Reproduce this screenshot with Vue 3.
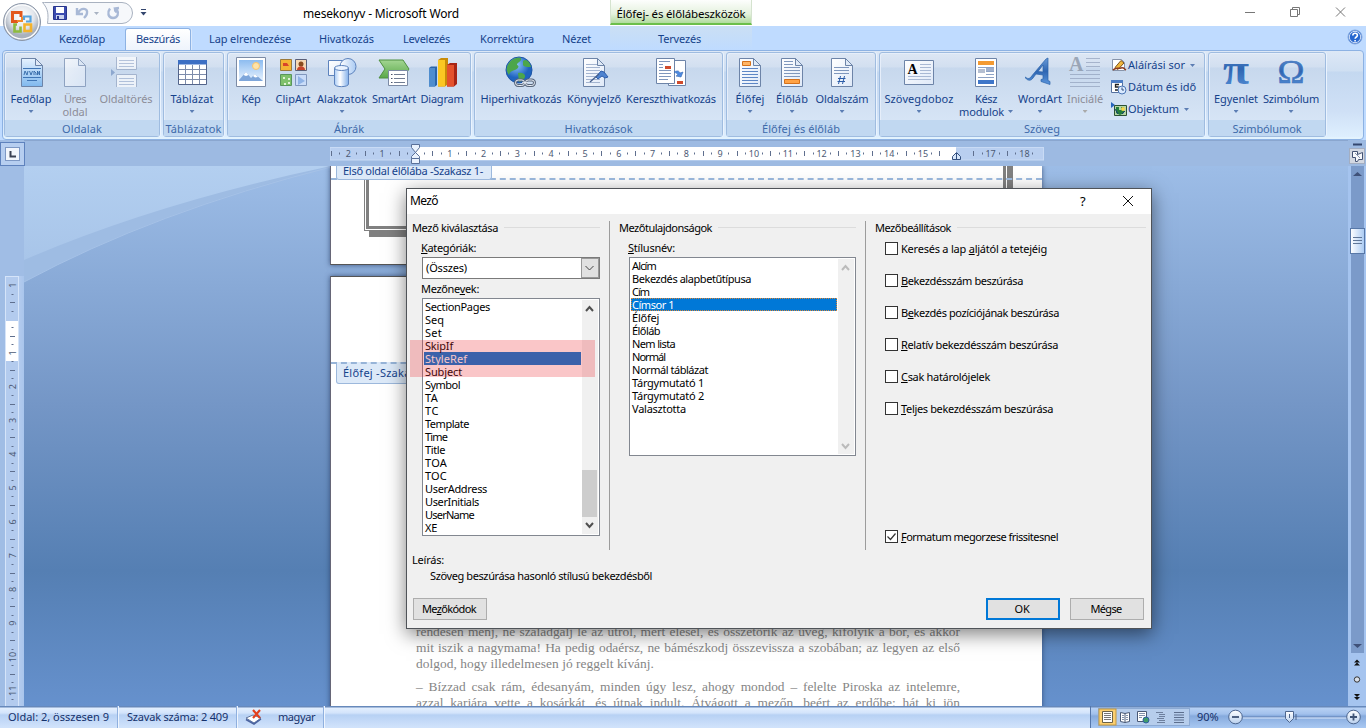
<script setup>
const vFit = {
  mounted(el, { value }) {
    if (!value) return
    const natural = el.getBoundingClientRect().width
    el.style.letterSpacing = (value - natural) / el.textContent.length + 'px'
  },
}

const mnemonic = (s) => s.replace(/&(.)/, '<u>$1</u>')

const tabs = [
  { label: 'Kezdőlap', x: 46, box: 78 },
  { label: 'Beszúrás', x: 44, box: 66, active: true },
  { label: 'Lap elrendezése', x: 82, box: 110 },
  { label: 'Hivatkozás', x: 55, box: 77 },
  { label: 'Levelezés', x: 47, box: 83 },
  { label: 'Korrektúra', x: 54, box: 78 },
  { label: 'Nézet', x: 29, box: 61 },
  { label: 'Tervezés', x: 43, box: 142 },
]

const page = (inner, x = 6, fill = 'url(#paper)') =>
  `<path d="M${x + 0.5} 2.5h14l7 7v21h-21z" fill="${fill}" stroke="#6d84a8"/>${inner}<path d="M${x + 14.5} 2.5v7h7z" fill="#dfe9f6" stroke="#6d84a8"/>`
const lines = (x1, x2, ys, c = '#7f97bd') =>
  ys.map((y) => `<path d="M${x1} ${y}.5H${x2}" stroke="${c}"/>`).join('')

const icons = {
  cover: page('<path d="M8 12.500h18M8 21.500h18M12 24.500h10" stroke="#3f75b5"/><path d="M9 19l1-4 2 4 1-4M14.500 15l1.500 4 1.500-4M19 19v-4l2 2v2M22.500 19v-4l2 4v-4" fill="none" stroke="#2f65a5" stroke-width=".9"/>', 6, 'url(#skyPage)'),
  blank: `<g opacity=".65">${page('', 5)}</g>`,
  pagebreak: `<g opacity=".65"><path d="M6.500 1v12.500h20V1" fill="#fff" stroke="#8fa0bd"/><path d="M6.500 31V18.500h20V31" fill="#fff" stroke="#8fa0bd"/>${lines(9, 24, [4, 7, 10, 22, 25, 28], '#a3b3cf')}<path d="M1 13l4 3.500L1 20z" fill="#6f8fc0"/></g>`,
  table: '<path d="M2.500 4.500h28v24h-28z" fill="#fff" stroke="#53648a"/><path d="M2 4h29v4.500H2z" fill="#3c6fc4"/><path d="M3 13.500h27M3 18.500h27M3 23.500h27M9.500 9v19M16.500 9v19M23.500 9v19" stroke="#7d8cab"/>',
  picture: '<path d="M1.500 1.500h29v29h-29z" fill="#fff" stroke="#7c8ba5"/><path d="M4 4h24v21H4z" fill="url(#sky)"/><circle cx="21" cy="10" r="3.500" fill="#ffe3a8" stroke="#f6c46e"/><path d="M4 25v-1l7-8 5 6 4-4 8 7z" fill="#7ea6da"/><path d="M8.500 19l2.500-3 2.500 3-2.500 1zM18 20l2-2 3 3-3 .5z" fill="#fff"/>',
  clipart: '<path d="M3.500 3.500h11v11h-11z" fill="#f5b534" stroke="#9c7a3a"/><path d="M6 7h4l2 3H6z" fill="#d8452a"/><path d="M18.500 3.500h11v11h-11z" fill="#f6d8b4" stroke="#5a5f77"/><circle cx="24" cy="8" r="2.500" fill="#8a4b1e"/><path d="M20 14c0-5 8-5 8 0z" fill="#c6452c"/><path d="M3.500 18.500h11v11h-11z" fill="#7fc16b" stroke="#58955b"/><path d="M6 21h2v2H6zm5 1h2v2h-2zm-4 5h2v2H7zm4-1h2v2h-2z" fill="#dff2d4"/><path d="M18.500 18.500h11v11h-11z" fill="#c9dcf8" stroke="#8097bd"/><path d="M21 20l7 5-7 4z" fill="#8fb3e6"/>',
  shapes: '<path d="M2.500 4.500h16v15h-16z" fill="url(#paper)" stroke="#5d83bd"/><circle cx="22" cy="10.500" r="8" fill="url(#ball)" stroke="#5d83bd"/><path d="M8.500 12v16c0 3.500 14 3.500 14 0V12" fill="url(#cyl)" stroke="#5d83bd"/><ellipse cx="15.500" cy="12" rx="7" ry="2.500" fill="#eaf3ff" stroke="#5d83bd"/>',
  smartart: '<path d="M1 4h24l6 9-6 9H1l6-9z" fill="url(#green)" stroke="#4e9040"/><path d="M10.500 14.500h19v15h-19z" fill="#fff" stroke="#7c8ba5"/><path d="M16 18.500h11M16 22.500h11M16 26.500h11" stroke="#707c92"/><path d="M13 18.500h1.500M13 22.500h1.500M13 26.500h1.500" stroke="#48536b"/>',
  chart: '<path d="M3 12l2-1.500h6V29l-2 1.500H3z" fill="#2b66ab"/><path d="M3 12h6v18.500H3z" fill="#4f8dce"/><path d="M12 4l3-2h7v26l-3 2.500h-7z" fill="#c98c08"/><path d="M12 4h7v26.500h-7z" fill="#fbc722"/><path d="M21 9l3-2h7v21l-3 2.500h-7z" fill="#a82515"/><path d="M21 9h7v21.500h-7z" fill="#e4512c"/>',
  globe: '<circle cx="14" cy="14" r="13" fill="url(#earth)" stroke="#1d55a5"/><path d="M4 7c3-5 9-6 12-5 1 4-4 4-4 7 3 1 1 4-2 5s-5 1-6 5C1 15 1 11 4 7zM18 5c4-3 7 2 8 6-3 0-7 0-8-2zM13 17c4-1 8 1 7 4s-5 5-6 5z" fill="#4ca64b"/><g fill="none" stroke="#59677c" stroke-width="3"><rect x="10.500" y="24" width="9" height="5.500" rx="2.700"/><rect x="20.500" y="24" width="9" height="5.500" rx="2.700"/></g><g fill="none" stroke="#e8eef6" stroke-width="1"><rect x="10.500" y="24" width="9" height="5.500" rx="2.700"/><rect x="20.500" y="24" width="9" height="5.500" rx="2.700"/><path d="M17 26.700h6"/></g>',
  bookmark: page(lines(8, 22, [8, 11, 14, 17, 20, 23, 26], '#a3b4d0') + '<path d="M18 21l5-6 3 1 4 5-3 1-3-2-4 3z" fill="#4e83d0" stroke="#2d5dab"/><path d="M12 26l9-8" stroke="#455f8d" stroke-width="1.300"/>', 5),
  crossref: '<path d="M13.500 4.500h17v25h-17z" fill="#fff" stroke="#6d84a8"/><path d="M22 25h6v3h-6z" fill="#cf4b2c"/><path d="M1.500 2.500h18v25h-18z" fill="#fff" stroke="#6d84a8"/><path d="M4 5.500h11M4 8.500h4M4 11.500h4M4 14.500h12M4 17.500h12M4 20.500h12M4 23.500h9" stroke="#7f97bd"/><path d="M10 10h6v3h-6z" fill="#cf4b2c"/><path d="M19 16c4-2 5-1 6 1l3-1-2 5-5-1 2-1c-1-2-2-2-4-3z" fill="#4e8ae0" stroke="#2f66b5" stroke-width=".6"/>',
  header: page(lines(8, 24, [12, 15, 18, 21, 24, 27], '#5d86c5') + '<path d="M8.500 5.500h8v4h-8z" fill="#ffb566" stroke="#d4711b"/>', 5),
  footer: page(lines(8, 17, [5, 8], '#7f97bd') + lines(8, 24, [11, 14, 17, 20], '#7f97bd') + '<path d="M8.500 23.500h15v4h-15z" fill="#ffa245" stroke="#d4711b"/>', 5),
  pagenum: page(lines(8, 23, [11, 14, 17], '#7f97bd') + '<path d="M14.500 20l-2 8M18.500 20l-2 8M12 22.500h7.500M11.500 25.500h7.500" stroke="#2c5da8" stroke-width="1"/>', 5),
  textbox: '<path d="M1.500 4.500h29v24h-29z" fill="url(#paper)" stroke="#6d84a8"/><path d="M17 8.500h11M17 11.500h11M17 14.500h11M17 17.500h11M5 20.500h23M5 23.500h23" stroke="#a9b9d4"/><text x="4.500" y="18" font-family="Liberation Serif" font-weight="bold" font-size="14">A</text>',
  quick: '<path d="M5.500 2.500h21v28h-21z" fill="#fff" stroke="#6d84a8"/><path d="M8 5h16v4H8z" fill="#f39a32"/><path d="M8 11.500h16M16 15.500h8M16 18.500h8M8 21.500h16" stroke="#8ea3c6"/><path d="M8 13h7v4H8z" fill="#b5bfd1"/><path d="M16 12h8v3h-8z" fill="#9fb0cd"/><path d="M8 24h16v4H8z" fill="#3f76c9"/>',
  wordart: '<path d="M1.500 21c3 3 5 1 7-2L22 3l2-1v22.500l2 1v3l-9-3v-2l2-.5v-4l-7-1-3 4c-2 3-5 3-7.500 0zM14 15.500l5 .5V9z" fill="url(#blue)" fill-rule="evenodd" stroke="#2a62a9" stroke-width=".7"/>',
  dropcap: '<g opacity=".65"><path d="M17 2.500h14M17 6.500h14M17 10.500h14M17 14.500h14M1 18.500h30M1 22.500h30M1 26.500h30M1 30.500h30" stroke="#8d9cb8"/><text x="0" y="15" font-family="Liberation Serif" font-weight="bold" font-size="20" fill="#7c8798">A</text></g>',
  pi: '<text x="3" y="27.500" font-family="Liberation Serif" font-weight="bold" font-size="44" fill="url(#blue)" textLength="26" lengthAdjust="spacingAndGlyphs">π</text>',
  omega: '<text x="2.500" y="27" font-family="Liberation Serif" font-size="34" fill="url(#blue)" stroke="#3d73bd" stroke-width=".6" textLength="27" lengthAdjust="spacingAndGlyphs">Ω</text>',
}

const groups = [
  { name: 'Oldalak', t: 40, w: 156, pad: 3, items: [
    { icon: 'cover', w: 46, l: [['Fedőlap', 41]], arrow: true },
    { icon: 'blank', w: 42, l: [['Üres', 22], ['oldal', 25]], off: true },
    { icon: 'pagebreak', w: 60, l: [['Oldaltörés', 53]], off: true },
  ] },
  { name: 'Táblázatok', t: 56, w: 61, pad: 3, items: [{ icon: 'table', w: 50, l: [['Táblázat', 43]], arrow: true }] },
  { name: 'Ábrák', t: 30, w: 244, pad: 4, items: [
    { icon: 'picture', w: 38, l: [['Kép', 19]] },
    { icon: 'clipart', w: 46, l: [['ClipArt', 35]] },
    { icon: 'shapes', w: 52, l: [['Alakzatok', 50]], arrow: true },
    { icon: 'smartart', w: 52, l: [['SmartArt', 44]] },
    { icon: 'chart', w: 44, l: [['Diagram', 43]] },
  ] },
  { name: 'Hivatkozások', t: 68, w: 249, pad: 2, items: [
    { icon: 'globe', w: 88, l: [['Hiperhivatkozás', 81]] },
    { icon: 'bookmark', w: 58, l: [['Könyvjelző', 54]] },
    { icon: 'crossref', w: 96, l: [['Kereszthivatkozás', 90]] },
  ] },
  { name: 'Élőfej és élőláb', t: 78, w: 150, pad: 4, items: [
    { icon: 'header', w: 38, l: [['Élőfej', 29]], arrow: true },
    { icon: 'footer', w: 46, l: [['Élőláb', 32]], arrow: true },
    { icon: 'pagenum', w: 54, l: [['Oldalszám', 53]], arrow: true },
  ] },
  { name: 'Szöveg', t: 36, w: 326, pad: 2, items: [
    { icon: 'textbox', w: 74, l: [['Szövegdoboz', 69]], arrow: true },
    { icon: 'quick', w: 60, l: [['Kész', 22], ['modulok', 45]], side: true },
    { icon: 'wordart', w: 48, l: [['WordArt', 44]], arrow: true },
    { icon: 'dropcap', w: 42, l: [['Iniciálé', 36]], arrow: true, off: true },
  ], rows: [
    { icon: 'sign', label: 'Aláírási sor', t: 57, arrow: true },
    { icon: 'date', label: 'Dátum és idő', t: 68 },
    { icon: 'object', label: 'Objektum', t: 51, arrow: true },
  ] },
  { name: 'Szimbólumok', t: 69, w: 118, pad: 2, items: [
    { icon: 'pi', w: 50, l: [['Egyenlet', 44]], arrow: true },
    { icon: 'omega', w: 60, l: [['Szimbólum', 56]], arrow: true },
  ] },
]

const smallIcons = {
  sign: '<path d="M1.500 2.500h9l3 3v8h-12z" fill="#fff" stroke="#8794aa"/><path d="M4 10.500l6-7 3 2.500-6 6.500z" fill="#f0b63c" stroke="#7b541e"/><path d="M2 13c3-3 5-1 8-2s3 1 5 2" fill="none" stroke="#8a3c22" stroke-width="1.500"/>',
  date: '<path d="M.500 1.500h11v12H.500z" fill="#fff" stroke="#54709e"/><path d="M0 1h12v3H0z" fill="#4b7cc4"/><path d="M8 5.500H4.500V8H7c1.500 0 1.500 3 0 3H4" fill="none" stroke="#222" stroke-width="1.300"/><circle cx="11" cy="11" r="4" fill="#d9e9ff" stroke="#4b76b5"/><path d="M11 8.500V11h2" fill="none" stroke="#32507f"/>',
  object: '<path d="M0 1l4 3-4 3z" fill="#2765bd"/><path d="M3.500 4.500h12v10h-12z" fill="#b5d6a3" stroke="#2b5134"/><path d="M5 6h3v3h2V6h3v6l-4 2-4-2z" fill="#257d3b"/><circle cx="12" cy="8" r="2" fill="#f6d64e"/><path d="M4 8l3 5M11 13l3-3" stroke="#173d72"/>',
}

const fields = [['SectionPages', 65], ['Seq', 19], ['Set', 17], ['SkipIf', 28], ['StyleRef', 42], ['Subject', 37], ['Symbol', 35], ['TA', 13], ['TC', 14], ['Template', 44], ['Time', 22], ['Title', 20], ['TOA', 22], ['TOC', 22], ['UserAddress', 62], ['UserInitials', 54], ['UserName', 49], ['XE', 12]]
const styles = [['Alcím', 24], ['Bekezdés alapbetűtípusa', 119], ['Cím', 17], ['Címsor 1', 42], ['Élőfej', 27], ['Élőláb', 28], ['Nem lista', 43], ['Normál', 33], ['Normál táblázat', 76], ['Tárgymutató 1', 72], ['Tárgymutató 2', 72], ['Valasztotta', 54]]
const options = [['Keresés a lap &aljától a tetejéig', 146], ['&Bekezdésszám beszúrása', 122], ['B&ekezdés pozíciójának beszúrása', 158], ['&Relatív bekezdésszám beszúrása', 157], ['&Csak határolójelek', 89], ['&Teljes bekezdésszám beszúrása', 152]]

const STEP = 33.8
const hTicks = []
for (let q = -10; q <= 73; q++) hTicks.push({ q, x: 86 + (q * STEP) / 4, n: Math.abs(q / 4) })
const hMarks = hTicks.filter((t) => t.q !== 0 && t.q !== 64 && t.q !== 63 && t.q !== 65)
const vMarks = []
for (let q = -4; q <= 45; q++) if (q !== 0) vMarks.push({ q, y: 43 + (q * STEP) / 4, n: Math.abs(q / 4) })
</script>

<template>
  <div class="app">
    <svg class="defs" width="0" height="0">
      <defs>
        <linearGradient id="paper" x2="1" y2="1"><stop offset="0" stop-color="#fff" /><stop offset="1" stop-color="#dfe9f8" /></linearGradient>
        <linearGradient id="skyPage" x2="0" y2="1"><stop offset="0" stop-color="#e6f2ff" /><stop offset="1" stop-color="#7fb8ee" /></linearGradient>
        <linearGradient id="sky" x2="0" y2="1"><stop offset="0" stop-color="#8dbcf0" /><stop offset="1" stop-color="#e8f3ff" /></linearGradient>
        <linearGradient id="ball"><stop offset="0" stop-color="#fff" /><stop offset="1" stop-color="#a9caf3" /></linearGradient>
        <linearGradient id="cyl"><stop offset="0" stop-color="#a9cbf5" /><stop offset=".4" stop-color="#fff" /><stop offset="1" stop-color="#82b0ea" /></linearGradient>
        <linearGradient id="green" x2="0" y2="1"><stop offset="0" stop-color="#a3d692" /><stop offset="1" stop-color="#5aa84a" /></linearGradient>
        <linearGradient id="blue" x2="0" y2="1"><stop offset="0" stop-color="#6a9bd8" /><stop offset=".5" stop-color="#2e66b2" /><stop offset="1" stop-color="#5b96dd" /></linearGradient>
        <radialGradient id="earth" cx=".4" cy=".3"><stop offset="0" stop-color="#8fc6fb" /><stop offset="1" stop-color="#1f63c0" /></radialGradient>
        <radialGradient id="orb" cy=".35"><stop offset="0" stop-color="#fff" /><stop offset=".65" stop-color="#e2e6ec" /><stop offset="1" stop-color="#a9b1bd" /></radialGradient>
        <linearGradient id="knob" x2="0" y2="1"><stop offset="0" stop-color="#fff" /><stop offset="1" stop-color="#b9d0ee" /></linearGradient>
      </defs>
    </svg>

    <header class="titlebar">
      <svg class="qat" width="110" height="26">
        <path d="M2.500 2.500H80a10.500 10.500 0 0 1 0 21H5.500C6.500 15 6.500 9 .5 2.500z" fill="#f6f8fb" stroke="#a9b2c0" />
        <path d="M11.500 6.500h13v13h-13z" fill="#3b4bb0" stroke="#28358c" /><path d="M14 7h8v6h-8z" fill="#fff" /><path d="M14 15h8v4h-8z" fill="#c9d2ee" /><path d="M15 16h2v3h-2z" fill="#28358c" />
        <path d="M35 8v6h6M36 13c3-6 10-5 9 0 0 2-1 3-3 5" fill="none" stroke="#a9b9d6" stroke-width="2.400" />
        <path d="M52 12h5l-2.500 3z" fill="#a9b3c3" />
        <path d="M68 8.500c-3 4-2 9 3 9.500 5 0 6-5 4-8l-3 .5M77 8l-4 .5 1.500 4" fill="none" stroke="#a9b9d6" stroke-width="2.400" />
        <path d="M99 9.500h5" stroke="#34466e" /><path d="M98.500 12h6l-3 3.500z" fill="#34466e" />
      </svg>
      <div class="title"><span v-fit="156">mesekonyv - Microsoft Word</span></div>
      <div class="context"><span v-fit="129">Élőfej- és élőlábeszközök</span></div>
      <svg class="winbtns" width="116" height="26" fill="none" stroke="#777">
        <path d="M0 12.500h10M45.500 9.500h7v7h-7zM47.500 9.500v-2h7v7h-2M91 7.500l9 9M100 7.500l-9 9" />
      </svg>
    </header>

    <nav class="tabs">
      <div v-for="t in tabs" :key="t.label" class="tab" :class="{ active: t.active, ctx: t.label === 'Tervezés' }" :style="{ width: t.box + 'px' }">
        <span v-fit="t.x">{{ t.label }}</span>
      </div>
      <svg class="help" width="16" height="16"><circle cx="8" cy="8" r="7" fill="#2767cf" stroke="#86a9de" /><circle cx="8" cy="8" r="5.700" fill="none" stroke="#fff" stroke-width=".8" /><path d="M5.800 6.500c0-3 4.600-3 4.600 0 0 1.500-2.300 1.500-2.300 3.300M8.100 11v1.600" fill="none" stroke="#fff" stroke-width="1.600" /></svg>
    </nav>

    <section class="ribbon">
      <div v-for="g in groups" :key="g.name" class="group" :style="{ width: g.w + 'px' }">
        <div class="items" :style="{ paddingLeft: g.pad + 'px' }">
          <div v-for="it in g.items" :key="it.icon" class="item" :class="{ off: it.off }" :style="{ width: it.w + 'px' }">
            <svg width="32" height="32" v-html="icons[it.icon]"></svg>
            <div v-for="(l, i) in it.l" :key="i" class="lbl"><span v-fit="l[1]">{{ l[0] }}</span><i v-if="it.side && i === 1" class="arr side"></i></div>
            <i v-if="it.arrow" class="arr"></i>
          </div>
          <div v-if="g.rows" class="rows">
            <div v-for="r in g.rows" :key="r.icon" class="row">
              <svg width="16" height="16" v-html="smallIcons[r.icon]"></svg>
              <span v-fit="r.t">{{ r.label }}</span><i v-if="r.arrow" class="arr"></i>
            </div>
          </div>
        </div>
        <div class="gname"><span v-fit="g.t">{{ g.name }}</span></div>
      </div>
    </section>

    <svg class="orb" width="42" height="42">
      <circle cx="21" cy="21" r="18.500" fill="url(#orb)" stroke="#8b96a8" />
      <circle cx="21" cy="21" r="17" fill="none" stroke="#fff" stroke-width="1.200" />
      <g fill="none">
        <path d="M17 20.500h-5.500v-9H20V16" stroke="#e2571c" stroke-width="3" /><path d="M23 19v-3.500h6.500v5H25" stroke="#58a3dc" stroke-width="2.200" />
        <path d="M16 23.500h-2.500v7h6v-5" stroke="#8dbb3d" stroke-width="2.600" /><path d="M23.500 23.500v6.500h6.500v-6.500z" stroke="#f4b32c" stroke-width="2.600" />
        <path d="M16 20h5v-4" stroke="#f08a2c" stroke-width="2" />
      </g>
    </svg>

    <main class="work">
      <div class="left">
        <div class="tabsel"><div><svg width="12" height="12"><path d="M4.500 3v5.500H10" fill="none" stroke="#3b4254" stroke-width="2" /></svg></div></div>
        <svg class="vruler" width="24" height="430">
          <rect x="5.500" y=".5" width="13" height="440" fill="#b3cbee" stroke="#d5e4f9" />
          <rect x="6" y="45" width="12" height="40" fill="#fff" />
          <g v-for="m in vMarks" :key="m.q">
            <text v-if="m.q % 4 === 0" :transform="`translate(15.500 ${m.y}) rotate(-90)`" class="num">{{ m.n }}</text>
            <path v-else :d="m.q % 2 === 0 ? `M10 ${Math.round(m.y) + 0.5}h5` : `M11.500 ${Math.round(m.y) + 0.5}h2`" stroke="#5f6f8e" />
          </g>
        </svg>
      </div>

      <div class="center">
        <div class="hstrip">
          <svg class="hruler" width="714" height="24">
            <rect x="0" y="7.500" width="713.500" height="12.500" fill="#b9cff0" stroke="#c9dbf5" />
            <rect x="86" y="7" width="540" height="13" fill="#fff" />
            <g v-for="m in hMarks" :key="m.q">
              <text v-if="m.q % 4 === 0" :x="m.x" y="17" class="num">{{ m.n }}</text>
              <path v-else :d="m.q % 2 === 0 ? `M${Math.floor(m.x) + 0.5} 11v5` : `M${Math.floor(m.x) + 0.5} 12.500v2`" stroke="#5f6f8e" />
            </g>
            <path d="M81.500 4.500h8v3l-4 5 4 4v2h-8v-2l4-4-4-5z" fill="#eaf2fd" stroke="#5a7099" /><path d="M81.500 18.500h8v5h-8z" fill="#eaf2fd" stroke="#5a7099" />
            <path d="M622.500 19.500v-3l4-4 4 4v3z" fill="#d9e7fa" stroke="#34507f" /><path d="M626.500 13v6" stroke="#34507f" />
          </svg>
        </div>
        <div class="canvas">
          <svg class="swoosh" width="310" height="120">
            <defs><linearGradient id="sw" x2="0" y2="1"><stop offset="0" stop-color="#b3cff0" /><stop offset="1" stop-color="#a8c5e9" /></linearGradient></defs>
            <path d="M0 0h307Q130 46 0 116z" fill="#9ebce3" /><path d="M0 0h307Q132 37 0 94z" fill="url(#sw)" />
            <path d="M307 1Q130 46 0 116" fill="none" stroke="#a6c2e7" />
          </svg>
          <article class="page upper">
            <div class="zone"><div class="tag"><span v-fit="140">Első oldal élőlába -Szakasz 1-</span></div></div>
            <div class="frame"><div></div></div>
          </article>
          <article class="page lower">
            <div class="tag hdr"><span v-fit="92">Élőfej -Szakasz 2-</span></div>
            <div class="copy">
              <p>rendesen menj, ne szaladgálj le az útról, mert elesel, és összetörik az üveg, kifolyik a bor, és akkor</p>
              <p>mit iszik a nagymama! Ha pedig odaérsz, ne bámészkodj összevissza a szobában; az legyen az első</p>
              <p class="end"><span v-fit="238">dolgod, hogy illedelmesen jó reggelt kívánj.</span></p>
              <p>– Bízzad csak rám, édesanyám, minden úgy lesz, ahogy mondod – felelte Piroska az intelemre,</p>
              <p>azzal karjára vette a kosárkát, és útnak indult. Átvágott a mezőn, beért az erdőbe; hát ki jön</p>
            </div>
          </article>
        </div>
      </div>

      <div class="scroll">
        <svg width="18" height="566">
          <rect width="18" height="566" fill="#a5c4ef" /><rect x="3" y="26" width="13" height="487" fill="#7b9ac9" />
          <rect width="18" height="26" fill="#9dbae2" />
          <path d="M5 4.500h9" stroke="#33476f" stroke-width="2" />
          <rect x="1.500" y="8.500" width="15" height="15" fill="#d3d8e2" stroke="#a3aec2" />
          <path d="M4.500 11.500h5v3l5-2v7h-4l-1 2h-2v-4h-3z" fill="#f6f8fc" stroke="#445374" /><path d="M7 13l5 5" stroke="#8794ad" />
          <path d="M5 36h9l-4.500-4z" fill="#3f5179" />
          <rect x="2.500" y="88.500" width="14" height="25" fill="url(#ball)" stroke="#5878a8" /><path d="M5 97.500h9M5 100.500h9M5 103.500h9" stroke="#5f7697" />
          <path d="M5 504h9l-4.500 4z" fill="#3f5179" />
          <path d="M9 519.500l-3 3h6zM9 522.500l-3 3h6z" fill="#111" /><path d="M6 554h6l-3 3zM6 557h6l-3 3z" fill="#111" />
          <circle cx="9" cy="539.500" r="2.700" fill="#d9e0ea" stroke="#333" />
        </svg>
      </div>
    </main>

    <footer class="status">
      <div class="cell c1"><span v-fit="101">Oldal: 2, összesen 9</span></div>
      <div class="cell c2"><span v-fit="101">Szavak száma: 2 409</span></div>
      <div class="cell c3">
        <svg width="18" height="16"><path d="M1 9l7-3 8 3-7 5z" fill="#fff" stroke="#6277a0" /><path d="M1 10.500l8 4.500 7-5" fill="none" stroke="#4a63a0" stroke-width="1.500" /><path d="M8 1l7 8M15 1L8 9" stroke="#e2401e" stroke-width="2.200" /></svg>
        <span v-fit="37">magyar</span>
      </div>
      <div class="right">
        <svg class="views" width="92" height="18">
          <rect x=".5" y=".5" width="91" height="17" fill="#b6cdec" stroke="#8caad4" /><rect x="1" y="1" width="17" height="16" fill="#fbcf70" stroke="#c29943" />
          <path d="M4.500 3.500h10v11h-10z" fill="#fff" stroke="#6b6247" /><path d="M6 5.500h7M6 7.500h7M6 9.500h7M6 11.500h7" stroke="#777" />
          <path d="M22.500 4.500l4.500 1 4.500-1v9l-4.500 1-4.500-1zM27 5.500v9" fill="#fff" stroke="#4a5a76" /><path d="M24 7.500h2M24 9.500h2M24 11.500h2M28 7.500h2M28 9.500h2M28 11.500h2" stroke="#8291aa" />
          <path d="M39.500 3.500h9v10h-9z" fill="#fff" stroke="#4a5a76" /><path d="M41 5.500h6M41 7.500h6M41 9.500h3" stroke="#8291aa" /><circle cx="48" cy="12" r="3" fill="#3f9b6b" stroke="#2d5fa0" />
          <path d="M58 4.500h7M61 6.500h6M61 8.500h6M59 10.500h7M61 12.500h6M59 14.500h8" stroke="#6d7f9e" />
          <path d="M76 4.500h10M76 7h10M76 9.500h10M76 12h10M76 14.500h10" stroke="#5d6f8e" />
        </svg>
        <span v-fit="21" class="pct">90%</span>
        <svg class="zoom" width="134" height="20">
          <path d="M15 10h104" stroke="#5f7fb3" /><path d="M15 11h104" stroke="#dce9fb" />
          <circle cx="7.500" cy="10" r="6.800" fill="url(#knob)" stroke="#4d668f" /><path d="M4 10h7" stroke="#3f5375" stroke-width="1.800" />
          <path d="M57.500 4.500h8v7l-4 4-4-4z" fill="url(#knob)" stroke="#4d668f" /><path d="M61.500 7v4M68 7v6" stroke="#4d668f" />
          <circle cx="125.500" cy="10" r="6.800" fill="url(#knob)" stroke="#4d668f" /><path d="M122 10h7M125.500 6.500v7" stroke="#3f5375" stroke-width="1.800" />
        </svg>
      </div>
    </footer>

    <div class="dialog">
      <div class="dhead"><span v-fit="28">Mező</span>
        <svg width="70" height="24"><text x="3" y="17" font-size="13">?</text><path d="M46 7l10 10M56 7l-10 10" stroke="#111" /></svg>
      </div>
      <div class="cols">
        <section class="col a">
          <h3><span v-fit="86">Mező kiválasztása</span><hr /></h3>
          <label><span v-fit="55"><u>K</u>ategóriák:</span></label>
          <div class="select"><span v-fit="41">(Összes)</span><div><svg width="15" height="18"><path d="M3.500 7l4 4 4-4" fill="none" stroke="#444" /></svg></div></div>
          <label class="names"><span v-fit="58">Mezőne<u>v</u>ek:</span></label>
          <div class="list tall">
            <ul><li v-for="f in fields" :key="f[0]" :class="{ sel: f[0] === 'StyleRef' }"><span v-fit="f[1]">{{ f[0] }}</span></li></ul>
            <div class="bar"><svg width="15" height="16"><path d="M4 11l3.500-4L11 11" fill="none" stroke="#505050" stroke-width="2" /></svg><div class="thumb"></div><svg width="15" height="17"><path d="M4 6l3.500 4L11 6" fill="none" stroke="#505050" stroke-width="2" /></svg></div>
          </div>
        </section>
        <section class="col b">
          <h3><span v-fit="93">Mezőtulajdonságok</span><hr /></h3>
          <label><span v-fit="47"><u>S</u>tílusnév:</span></label>
          <div class="list short">
            <ul><li v-for="f in styles" :key="f[0]" :class="{ sel: f[0] === 'Címsor 1', dotted: f[0] === 'Címsor 1' }"><span v-fit="f[1]">{{ f[0] }}</span></li></ul>
            <div class="bar"><svg width="15" height="17"><path d="M4 11l3.500-4L11 11" fill="none" stroke="#bbb" stroke-width="2" /></svg><svg width="15" height="18"><path d="M4 8l3.500 4L11 8" fill="none" stroke="#bbb" stroke-width="2" /></svg></div>
          </div>
        </section>
        <section class="col c">
          <h3><span v-fit="76">Mezőbeállítások</span><hr /></h3>
          <div v-for="o in options" :key="o[0]" class="opt"><i class="box"></i><span v-fit="o[1]" v-html="mnemonic(o[0])"></span></div>
          <div class="opt keep"><i class="box"><svg width="11" height="11"><path d="M1.500 5.500l3 3 5-6" fill="none" stroke="#333" stroke-width="1.200" /></svg></i><span v-fit="157"><u>F</u>ormatum megorzese frissitesnel</span></div>
        </section>
      </div>
      <div class="desc"><span v-fit="32">Leírás:</span></div>
      <div class="desc in"><span v-fit="222">Szöveg beszúrása hasonló stílusú bekezdésből</span></div>
      <div class="btns">
        <button><span v-fit="54">Me<u>z</u>őkódok</span></button>
        <button class="ok"><span v-fit="15">OK</span></button>
        <button><span v-fit="31">Mégse</span></button>
      </div>
      <div class="mark"></div>
    </div>
  </div>
</template>

<style>
body { overflow: hidden; }
</style>

<style scoped>
* { box-sizing: border-box; }
.app { position: relative; width: 1366px; height: 728px; overflow: hidden; display: flex; flex-direction: column; font-family: "Noto Sans", "Open Sans", sans-serif; font-size: 11px; color: #15428b; white-space: nowrap; background: #bfdbff; }
.app svg { display: block; flex: none; }
.app span { display: inline-block; }
.app .defs { position: absolute; }
.titlebar { height: 26px; flex: none; background: #fff; display: flex; color: #000; line-height: 27px; font-size: 12px; }
.qat { margin-left: 42px; }
.title { margin-left: 151px; width: 307px; }
.context { width: 142px; height: 25px; text-align: center; border: solid #d5e3cf; border-width: 0 1px 2px; border-bottom-color: #6cbf4a; background: linear-gradient(#fdfefd, #e4f1dd 60%, #b2db9e); font-size: 11.500px; }
.winbtns { margin-left: 493px; }
.tabs { height: 24px; flex: none; display: flex; align-items: flex-end; padding-left: 43px; line-height: 23px; position: relative; }
.tab { height: 23px; text-align: center; }
.tab.active { height: 22px; margin: 0 4px; background: linear-gradient(#fff, #eef4fc); border: 1px solid #8db2e3; border-bottom: 0; border-radius: 3px 3px 0 0; line-height: 20px; box-shadow: 1px 0 0 #d9e8fc; }
.tab:nth-child(3) { margin-right: 3px; }
.tab.ctx { height: 24px; line-height: 25px; margin-left: 3px; padding-right: 3px; background: linear-gradient(#cbdff4, #bfdbff); }
.help { position: absolute; right: 3px; top: 3px; }
.ribbon { height: 90px; flex: none; display: flex; gap: 3px; margin: 0 2px; padding: 1px 0 0 1px; border: 1px solid #8db2e3; border-radius: 4px; background: linear-gradient(#dde8f6, #cfdff2 20px, #c4d8f0 21px, #cfe0f6 60px, #dff0ff); box-shadow: inset 0 -2px #e3f3fe; }
.group { height: 85px; border: 1px solid #9fbce0; border-radius: 3px; display: flex; flex-direction: column; justify-content: space-between; background: linear-gradient(#dde7f4, #d2dff0 14px, #c7d8ed 15px, #d7e5f6 70px); box-shadow: inset 1px 1px #e6eefa, 1px 0 #eaf3fe; }
.items { display: flex; padding-top: 3px; }
.item { display: flex; flex-direction: column; align-items: center; flex: none; line-height: 13px; height: 64px; }
.item svg { margin-bottom: 4px; overflow: visible; }
.lbl { height: 13px; display: flex; }
.off { color: #8d8d98; }
.arr { display: block; width: 5px; height: 3px; background: #5c7db3; clip-path: polygon(0 0, 100% 0, 50% 100%); margin-top: 5px; }
.off .arr { background: #aaa; }
.arr.side { margin: 5px 0 0 4px; }
.rows { padding: 1px 0 0 5px; display: flex; flex-direction: column; gap: 6px; }
.row { display: flex; line-height: 16px; height: 16px; }
.row span { margin-left: 1px; }
.row .arr { margin: 7px 0 0 5px; }
.gname { height: 16px; line-height: 17px; text-align: center; color: #3e6aaa; background: #c1d8f1; }
.orb { position: absolute; left: 1px; top: 1px; }
.work { height: 566px; flex: none; display: flex; background: #9dbae2; }
.left { width: 24px; flex: none; display: flex; flex-direction: column; justify-content: space-between; background: #a0bde5; }
.tabsel { width: 25px; height: 24px; margin-top: 2px; border: 1px solid #5e82bd; padding: 4px; background: #b6cef0; }
.tabsel div { width: 15px; height: 14px; border: 1px solid #7d98c4; background: #f2f6fc; }
.vruler { background: linear-gradient(90deg, #a0bde5 5px, #b3cbee 19px, #a9c5ec); }
.num { font-size: 9px; text-anchor: middle; fill: #4c5a74; }
.center { flex: 1; display: flex; flex-direction: column; min-width: 0; }
.hstrip { height: 26px; flex: none; padding-left: 306px; border-top: 1px solid #8aa6cf; }
.hruler { margin-top: -1px; }
.canvas { height: 540px; position: relative; padding-left: 306px; background: linear-gradient(#9dbde7, #7496c6 240px, #557fb3 405px, #6691cd); display: flex; flex-direction: column; gap: 11px; overflow: hidden; }
.swoosh { position: absolute; left: 0; top: 0; }
.page { position: relative; width: 712px; flex: none; background: #fff; box-shadow: 0 0 5px rgba(30, 50, 90, .7); border-left: 1px solid #667; }
.upper { height: 99px; border-bottom: 1px solid #555; display: flex; flex-direction: column; overflow: hidden; }
.lower { height: 440px; border-top: 1px solid #555; padding-top: 85px; }
.zone { position: relative; z-index: 1; height: 14px; flex: none; border-bottom: 2px dashed #97b4d8; padding-left: 5px; }
.tag { width: 156px; height: 14px; line-height: 10px; padding-left: 6px; background: #dce9f8; border: 1px solid #9cb8dc; border-top: 0; border-radius: 0 0 3px 3px; }
.lower .tag { height: 22px; line-height: 22px; margin-left: 5px; }
.lower::before { content: ""; position: absolute; left: 0; right: 0; top: 85px; border-top: 2px dashed #97b4d8; }
.frame { width: 644px; height: 75px; flex: none; margin: -24px 0 0 33px; border: 1px solid #808080; border-top: 0; padding: 0 1px 1px; box-shadow: 5px 6px #808080; }
.frame div { height: 100%; border: 3px solid #808080; border-top: 0; }
.copy { margin: 240px 82px 0 85px; font: 13.400px/16px "Liberation Serif", serif; color: #858585; }
.copy p { margin: 0; height: 16px; text-align: justify; text-align-last: justify; }
.copy p.end { text-align-last: left; margin-bottom: 7px; }
.scroll { width: 18px; flex: none; }
.status { height: 22px; flex: none; display: flex; background: linear-gradient(#6789bb 0 1px, #e3effe 2px, #d3e4fb 7px, #b7d1f4 9px, #d0e2fb 21px); line-height: 21px; color: #15316b; }
.cell { border-right: 1px solid #8fb0df; box-shadow: 1px 0 #eef5fe; height: 22px; flex: none; }
.c1 { width: 118px; padding-left: 8px; }
.c2 { width: 119px; padding-left: 9px; }
.c3 { width: 87px; padding-left: 8px; display: flex; gap: 15px; }
.c3 svg { margin-top: 3px; }
.right { margin-left: auto; width: 276px; height: 22px; padding-left: 7px; border-left: 1px solid #5577ab; display: flex; background: linear-gradient(#6789bb 0 1px, #b7d1f4 2px, #a2c1ec 8px, #86aadd 10px, #a9c8f2); }
.views { margin-top: 2px; }
.pct { margin-left: 7px; width: 21px; }
.zoom { margin: 1px 0 0 10px; }
.dialog { position: absolute; left: 406px; top: 188px; width: 746px; height: 441px; border: 1px solid #4f5358; background: #f0f0f0; color: #000; box-shadow: 0 5px 18px rgba(0, 0, 0, .5); display: flex; flex-direction: column; }
.dhead { height: 25px; flex: none; background: #fff; display: flex; justify-content: space-between; padding: 0 14px 0 3px; line-height: 24px; font-size: 12px; }
.dhead svg { width: 60px; }
.cols { margin-top: 7px; height: 329px; flex: none; display: grid; grid-template: 329px / 203px 256px 1fr; }
.col { line-height: 14px; }
.a, .b { border-right: 1px solid #9c9c9c; }
.a { padding: 0 9px 0 5px; }
.b, .c { padding: 0 9px; }
.c { padding-right: 5px; }
h3 { margin: 0; font: inherit; display: flex; height: 14px; gap: 6px; }
hr { flex: 1; height: 1px; border: 0; background: #dcdcdc; margin: 6px 0 0; }
label { display: block; height: 14px; margin: 6px 0 2px 9px; }
label.names { margin-top: 3px; }
.select { margin-left: 10px; width: 178px; height: 22px; background: #fff; border: 1px solid #7a7a7a; display: flex; justify-content: space-between; padding-left: 3px; line-height: 20px; }
.select div { width: 18px; background: #e1e1e1; border: 1px solid #999; }
.list { margin-left: 10px; background: #fff; border: 1px solid #828790; display: flex; justify-content: space-between; padding: 1px; }
.tall { width: 178px; height: 238px; }
.short { width: 227px; height: 199px; }
ul { margin: 0; padding: 0; list-style: none; flex: 1; }
li { height: 13px; line-height: 13px; padding-left: 1px; }
li span { height: 13px; vertical-align: top; }
li.sel { background: #0078d7; color: #fff; }
li.dotted { outline: 1px dotted #d8873a; outline-offset: -1px; }
.bar { width: 16px; margin-left: 1px; background: #f0f0f0; display: flex; flex-direction: column; justify-content: space-between; }
.thumb { height: 47px; width: 15px; margin-top: auto; background: #cdcdcd; }
.opt { display: flex; height: 14px; margin: 7px 0 18px 10px; gap: 3px; }
.opt + .opt { margin-top: 0; }
.opt.keep { margin-top: 114px; }
.box { width: 13px; height: 13px; border: 1px solid #333; background: #fff; }
.desc { height: 16px; margin-left: 5px; margin-top: 2px; line-height: 16px; flex: none; }
.desc.in { margin: 0 0 0 23px; }
.btns { display: flex; margin: 14px 7px 0 6px; gap: 10px; }
button { width: 74px; height: 22px; padding: 0 2px 0 0; border: 1px solid #adadad; background: #e1e1e1; font: inherit; line-height: 18px; color: #000; text-align: center; }
button.ok { margin-left: auto; border: 2px solid #0078d7; }
.mark { position: absolute; left: 3px; top: 151px; width: 185px; height: 37px; background: rgba(237, 28, 36, .25); }
</style>
